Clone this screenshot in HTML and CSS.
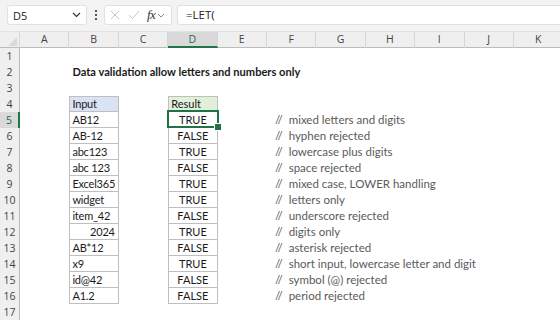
FILE: index.html
```html
<!DOCTYPE html>
<html>
<head>
<meta charset="utf-8">
<link rel="stylesheet" href="styles.css">
</head>
<body>
<div class="app">
  <div class="toolbar">
    <div class="namebox">
      <span class="nb-text">D5</span>
      <svg class="nb-chev" width="9" height="6" viewBox="0 0 9 6"><path d="M1 1 L4.5 4.5 L8 1" fill="none" stroke="#333" stroke-width="1.2"/></svg>
    </div>
    <div class="dots">
      <svg width="4" height="12" viewBox="0 0 4 12"><circle cx="2" cy="2" r="1.1" fill="#333"/><circle cx="2" cy="6" r="1.1" fill="#333"/><circle cx="2" cy="10" r="1.1" fill="#333"/></svg>
    </div>
    <div class="fxbox">
      <svg class="ic-x" width="10" height="10" viewBox="0 0 10 10"><path d="M1 1 L9 9 M9 1 L1 9" stroke="#c4c4c4" stroke-width="1"/></svg>
      <svg class="ic-check" width="12" height="10" viewBox="0 0 12 10"><path d="M1 5 L4.5 8.5 L11 1" fill="none" stroke="#c4c4c4" stroke-width="1"/></svg>
      <span class="fx">fx</span>
      <svg class="fx-chev" width="8" height="5" viewBox="0 0 8 5"><path d="M1 1 L4 4 L7 1" fill="none" stroke="#888" stroke-width="1"/></svg>
    </div>
    <div class="formula">=LET(</div>
  </div>

  <div class="sheet">
    <div class="row head">
      <div class="corner"><span class="tri"></span></div>
      <div class="ch">A</div><div class="ch">B</div><div class="ch">C</div><div class="ch sel">D</div><div class="ch">E</div><div class="ch">F</div><div class="ch">G</div><div class="ch">H</div><div class="ch">I</div><div class="ch">J</div><div class="ch">K</div>
    </div>
    <div class="row"><div class="rh">1</div></div>
    <div class="row"><div class="rh">2</div><div class="title">Data validation allow letters and numbers only</div></div>
    <div class="row"><div class="rh">3</div></div>
    <div class="row"><div class="rh">4</div><div class="cb th th-in">Input</div><div class="cd th th-res">Result</div></div>
    <div class="row"><div class="rh rsel">5</div><div class="cb">AB12</div><div class="cd active">TRUE</div><div class="cf">// &nbsp;mixed letters and digits</div></div>
    <div class="row"><div class="rh">6</div><div class="cb">AB-12</div><div class="cd">FALSE</div><div class="cf">// &nbsp;hyphen rejected</div></div>
    <div class="row"><div class="rh">7</div><div class="cb">abc123</div><div class="cd">TRUE</div><div class="cf">// &nbsp;lowercase plus digits</div></div>
    <div class="row"><div class="rh">8</div><div class="cb">abc 123</div><div class="cd">FALSE</div><div class="cf">// &nbsp;space rejected</div></div>
    <div class="row"><div class="rh">9</div><div class="cb">Excel365</div><div class="cd">TRUE</div><div class="cf">// &nbsp;mixed case, LOWER handling</div></div>
    <div class="row"><div class="rh">10</div><div class="cb">widget</div><div class="cd">TRUE</div><div class="cf">// &nbsp;letters only</div></div>
    <div class="row"><div class="rh">11</div><div class="cb">item_42</div><div class="cd">FALSE</div><div class="cf">// &nbsp;underscore rejected</div></div>
    <div class="row"><div class="rh">12</div><div class="cb num">2024</div><div class="cd">TRUE</div><div class="cf">// &nbsp;digits only</div></div>
    <div class="row"><div class="rh">13</div><div class="cb">AB*12</div><div class="cd">FALSE</div><div class="cf">// &nbsp;asterisk rejected</div></div>
    <div class="row"><div class="rh">14</div><div class="cb">x9</div><div class="cd">TRUE</div><div class="cf">// &nbsp;short input, lowercase letter and digit</div></div>
    <div class="row"><div class="rh">15</div><div class="cb">id@42</div><div class="cd">FALSE</div><div class="cf">// &nbsp;symbol (@) rejected</div></div>
    <div class="row"><div class="rh">16</div><div class="cb">A1.2</div><div class="cd">FALSE</div><div class="cf">// &nbsp;period rejected</div></div>
    <div class="row"><div class="rh">17</div></div>
  </div>
</div>
</body>
</html>
```

FILE: styles.css
```css
* { box-sizing: border-box; }
html, body { margin: 0; padding: 0; background: #fff; }
body { width: 560px; height: 320px; overflow: hidden; font-family: "Lato", "Liberation Sans", sans-serif; }

.app { width: 560px; height: 320px; overflow: hidden; }

.toolbar {
  height: 32px;
  background: #f3f3f3;
  border-bottom: 1px solid #e2e2e2;
  display: flex;
  align-items: flex-start;
  padding: 5px 0 0 7px;
}
.namebox {
  width: 80px; height: 20px;
  background: #fff;
  border: 1px solid #e1e1e1;
  border-radius: 3px;
  display: flex; align-items: center;
  padding: 0 5px 0 5px;
}
.nb-text { font-family: "Open Sans", sans-serif; font-size: 11px; color: #222; flex: 1; }
.dots { width: 17px; height: 20px; display: flex; align-items: center; justify-content: center; }
.fxbox {
  width: 68px; height: 20px;
  background: #fff;
  border: 1px solid #e1e1e1;
  border-radius: 3px;
  display: flex; align-items: center;
  padding-left: 5px;
}
.ic-x { margin-right: 8px; }
.ic-check { margin-right: 7px; }
.fx { font-family: "Liberation Serif", serif; font-style: italic; font-size: 13px; color: #333; margin-right: 2px; letter-spacing: -0.5px; }
.formula {
  margin-left: 5px;
  flex: 1; height: 20px;
  background: #fff;
  border: 1px solid #e1e1e1;
  border-radius: 3px 0 0 3px;
  border-right: none;
  font-family: "Open Sans", sans-serif; font-size: 11.5px; color: #222;
  line-height: 18px;
  padding-left: 8px;
}

.row {
  display: grid;
  grid-template-columns: 20px repeat(11, 49.4px);
  height: 16px;
}
.row.head { background: #efefef; border-bottom: 1px solid #bcbcbc; }
.corner { position: relative; border-right: 1px solid #d6d6d6; }
.tri {
  position: absolute; right: 2px; bottom: 2px;
  width: 0; height: 0;
  border-left: 9px solid transparent;
  border-bottom: 9px solid #d9d9d9;
}
.ch {
  font-family: "Open Sans", sans-serif; font-size: 10.5px; color: #444;
  text-align: center; line-height: 15px;
  border-right: 1px solid #d6d6d6;
}
.ch.sel { background: #d9d9d9; color: #1e6b3e; border-bottom: 2px solid #217346; line-height: 14px; }

.rh {
  grid-column: 1;
  background: #efefef;
  border-right: 1px solid #bcbcbc;
  font-family: "Open Sans", sans-serif; font-size: 10.5px; color: #444;
  text-align: center; line-height: 16px;
}
.rh.rsel { background: #d9d9d9; color: #1e6b3e; border-right: 2px solid #217346; }

.title {
  grid-column: 3 / span 7;
  font-weight: bold; font-size: 11.1px; color: #1a1a1a;
  line-height: 16px; padding-left: 3px; white-space: nowrap;
}
.cb, .cd {
  font-size: 11px; color: #1a1a1a; line-height: 15px;
  border-left: 1px solid #bfbfbf;
  border-right: 1px solid #bfbfbf;
  border-bottom: 1px solid #bfbfbf;
  white-space: nowrap;
}
.cb { grid-column: 3; padding-left: 2px; letter-spacing: -0.2px; }
.cd { grid-column: 5; text-align: center; }
.cb.num { text-align: right; padding-right: 3px; }
.th { border-top: 1px solid #bfbfbf; line-height: 14px; }
.th-in { background: #dae3f3; }
.th-res { background: #e2efda; text-align: left; padding-left: 2px; }

.active { position: relative; }
.active::after {
  content: ""; position: absolute;
  left: -2px; top: -2px; right: -2px; bottom: -1px;
  border: 2px solid #217346;
}
.active::before {
  content: ""; position: absolute;
  right: -5px; bottom: -4px;
  width: 6px; height: 6px;
  background: #217346;
  border: 1px solid #fff;
  z-index: 2;
}

.cf {
  grid-column: 7 / span 6;
  font-size: 11.5px; color: #5a5a5a; line-height: 16px;
  padding-left: 8px; white-space: nowrap;
}
```
